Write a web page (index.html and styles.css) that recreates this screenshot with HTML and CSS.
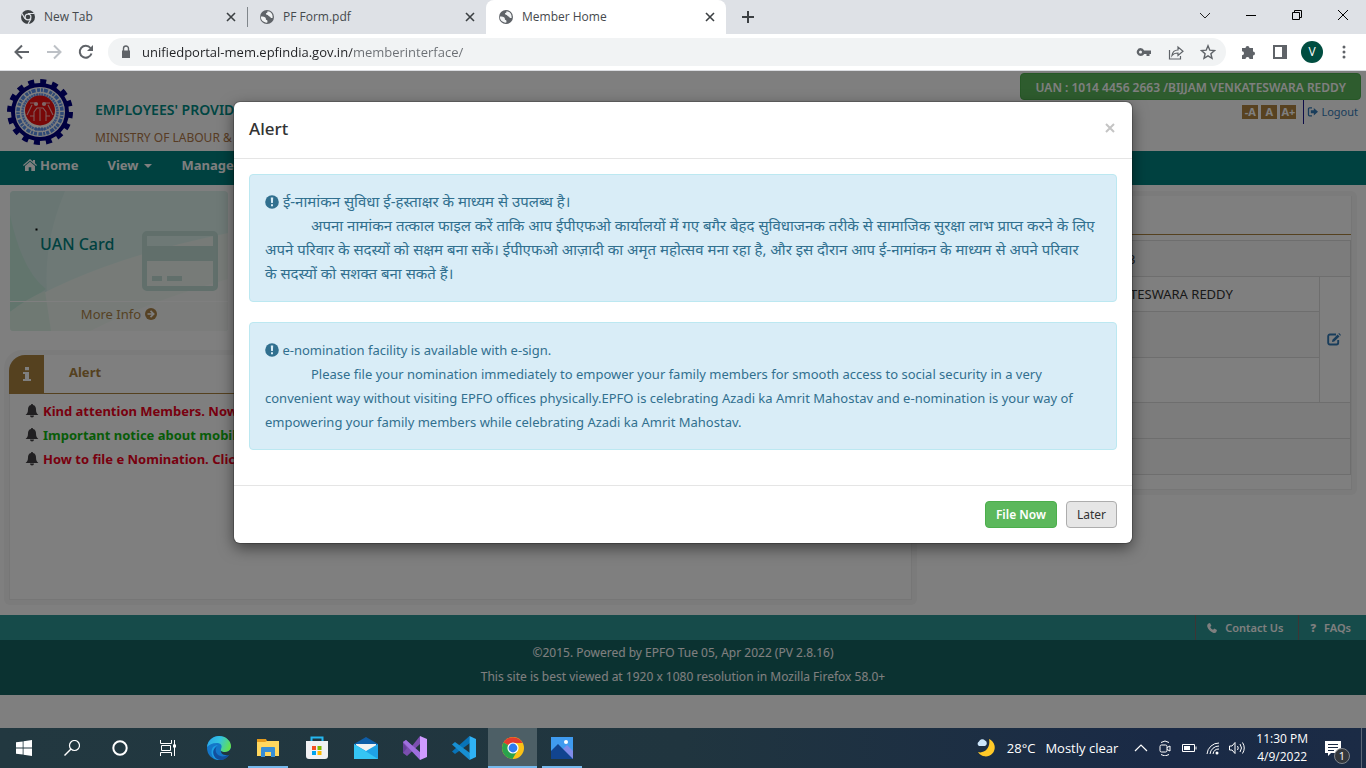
FILE: index.html
```html
<!DOCTYPE html>
<html lang="en">
<head>
<meta charset="utf-8">
<title>Member Home</title>
<link rel="stylesheet" href="styles.css">
</head>
<body>
<svg class="defs" aria-hidden="true">
  <symbol id="i-close" viewBox="0 0 16 16"><path d="M4 4l8 8M12 4l-8 8" stroke="currentColor" stroke-width="1.600" fill="none"/></symbol>
  <symbol id="i-globe" viewBox="0 0 16 16"><circle cx="8" cy="8" r="7" fill="#5f6368"/><path d="M1.8 7.6c2 .1 4.400 .2 4.900 1.300.4 1-.2 1.600 1 2 .9.300.8 1.400.7 2.700C5 14 1.800 11.500 1.800 7.600zM8.500 2.200c-.2 1.200.1 1.500-1 1.900-1 .4-.6 1.500.4 1.700 1.500.2 1.300 1.500 2.500 1.600 1.300.1 1 1.800 2.500 1.700l.7-.2C14 5 12 2.400 8.500 2.200z" fill="#f1f3f4"/></symbol>
  <symbol id="i-bell" viewBox="0 0 14 14"><path d="M7 0c.8 0 1 .5 1 1.100C10.300 1.600 11 3.500 11 5.500c0 3 1 4.400 2.400 5.500H.6C2 9.900 3 8.500 3 5.500c0-2 .7-3.900 3-4.400C6 .5 6.200 0 7 0zM5 11.500h4A2 2 0 0 1 5 11.500z" fill="#403f42"/></symbol>
  <symbol id="i-warn" viewBox="0 0 14 14"><circle cx="7" cy="7" r="6.800" fill="#31708f"/><path d="M5.800 2.500h2.400L7.900 8H6.100zM6 9.200h2v2H6z" fill="#d9edf7"/></symbol>
</svg>

<header class="tabstrip">
  <div class="tab">
    <svg class="i16" viewBox="0 0 16 16"><circle cx="8" cy="8" r="7" fill="#3c4043"/><path d="M8 4.500h6M5 9.800L2 4.500M11 9.800L8 15" stroke="#dee1e6" stroke-width="1.200"/><circle cx="8" cy="8" r="3.500" fill="#dee1e6"/><circle cx="8" cy="8" r="2.300" fill="#3c4043"/></svg>
    <span class="tab-name">New Tab</span>
    <button class="bare" aria-label="Close New Tab"><svg class="i16"><use href="#i-close"/></svg></button>
  </div>
  <div class="tab tab-divided">
    <svg class="i16"><use href="#i-globe"/></svg>
    <span class="tab-name">PF Form.pdf</span>
    <button class="bare" aria-label="Close PF Form.pdf"><svg class="i16"><use href="#i-close"/></svg></button>
  </div>
  <div class="tab tab-active">
    <svg class="i16"><use href="#i-globe"/></svg>
    <span class="tab-name">Member Home</span>
    <button class="bare" aria-label="Close Member Home"><svg class="i16"><use href="#i-close"/></svg></button>
  </div>
  <button class="bare new-tab" aria-label="New tab"><svg class="i16" viewBox="0 0 16 16"><path d="M8 2v12M2 8h12" stroke="#3c4043" stroke-width="2"/></svg></button>
  <div class="window-controls">
    <button class="bare" aria-label="Search tabs"><svg class="i16" viewBox="0 0 16 16"><path d="M3 6l5 5 5-5" fill="none" stroke="#222"/></svg></button>
    <button class="bare" aria-label="Minimize"><svg class="i16" viewBox="0 0 16 16"><path d="M3 8.500h10" stroke="#000"/></svg></button>
    <button class="bare" aria-label="Restore"><svg class="i16" viewBox="0 0 16 16"><path d="M3.500 5.500h7v7h-7zM5.500 5V3.500h7v7H11" fill="none" stroke="#000"/></svg></button>
    <button class="bare" aria-label="Close window"><svg class="i16" viewBox="0 0 16 16"><path d="M3 3l10 10M13 3L3 13" stroke="#000"/></svg></button>
  </div>
</header>

<div class="toolbar">
  <div class="nav-buttons">
    <button class="bare" aria-label="Back"><svg class="i16" viewBox="0 0 16 16"><path d="M15 8H2M8 1.500L1.500 8 8 14.500" fill="none" stroke="#5f6368" stroke-width="2"/></svg></button>
    <button class="bare" aria-label="Forward"><svg class="i16" viewBox="0 0 16 16"><path d="M1 8h13M8 1.500L14.500 8 8 14.500" fill="none" stroke="#bdc1c6" stroke-width="2"/></svg></button>
    <button class="bare" aria-label="Reload"><svg class="i16" viewBox="0 0 16 16"><path d="M13.500 9.500A6 6 0 1 1 12.500 4" fill="none" stroke="#5f6368" stroke-width="2"/><path d="M15 1v6H9z" fill="#5f6368"/></svg></button>
  </div>
  <div class="omnibox">
    <svg class="i16" viewBox="0 0 16 16"><path d="M4 6.500h8V14H4z" fill="#5f6368"/><path d="M5.500 7V4.500a2.500 2.500 0 0 1 5 0V7" fill="none" stroke="#5f6368" stroke-width="1.400"/></svg>
    <input class="url" type="text" aria-label="Address" value="unifiedportal-mem.epfindia.gov.in/memberinterface/">
    <button class="bare" aria-label="Passwords"><svg class="i16" viewBox="0 0 16 16"><path d="M4.500 4a4 4 0 0 1 3.700 2.500H15V10h-1.500v2h-3v-2H8.200A4 4 0 1 1 4.500 4zm0 2.500a1.500 1.500 0 1 0 0 3 1.500 1.500 0 0 0 0-3z" fill="#5f6368" fill-rule="evenodd"/></svg></button>
    <button class="bare" aria-label="Share"><svg class="i16" viewBox="0 0 16 16"><path d="M1.500 6v9h11v-3M4 11.500c.5-4 3-5.500 6-5.500V3l5 4.200-5 4.300V9c-2.500 0-4.500.5-6 2.500z" fill="none" stroke="#5f6368" stroke-width="1.200"/></svg></button>
    <button class="bare" aria-label="Bookmark"><svg class="i16" viewBox="0 0 16 16"><path d="M8 1.800l1.800 4.400 4.700.4-3.600 3.100 1.100 4.600L8 11.800l-4 2.500 1.100-4.600L1.500 6.600l4.700-.4z" fill="none" stroke="#5f6368" stroke-width="1.400"/></svg></button>
  </div>
  <div class="extensions">
    <button class="bare" aria-label="Extensions"><svg class="i16" viewBox="0 0 16 16"><path d="M2 4h3.500a2 2 0 1 1 4 0H13v3.500a2 2 0 1 1 0 4V15H9.500a2 2 0 1 0-4 0H2v-3.800a2 2 0 1 0 0-4z" fill="#5f6368"/></svg></button>
    <button class="bare" aria-label="Side panel"><svg class="i16" viewBox="0 0 16 16"><path d="M2 2h12v12H2z" fill="none" stroke="#5f6368" stroke-width="2"/><path d="M10 2h5v12h-5z" fill="#5f6368"/></svg></button>
    <button class="avatar">V</button>
    <button class="bare" aria-label="Menu"><svg class="i16" viewBox="0 0 16 16"><circle cx="8" cy="3" r="1.500"/><circle cx="8" cy="8" r="1.500"/><circle cx="8" cy="13" r="1.500"/></svg></button>
  </div>
</div>

<div class="page">
  <div class="masthead">
    <svg class="logo" viewBox="0 0 68 68">
      <circle cx="34" cy="34" r="30.500" fill="none" stroke="#000080" stroke-width="5" stroke-dasharray="5.980 5.995"/>
      <circle cx="34" cy="34" r="27" fill="#fff" stroke="#000080" stroke-width="4"/>
      <circle cx="34" cy="34" r="22" fill="none" stroke="#5a90ea" stroke-width="3.500" stroke-dasharray="3 1 2 1 4 1.500"/>
      <circle cx="34" cy="34" r="17.500" fill="none" stroke="#6c9cf0" stroke-width="2.500" stroke-dasharray="2 .6"/>
      <circle cx="34" cy="32.500" r="15" fill="#f01010"/>
      <path d="M21 37l5-10M47 37l-5-10M24 25h5M39 25h5M24 38h4M40 38h4M28 43v-9l3-4h6l3 4v9M34 31v12" stroke="#ffb8b8" stroke-width="1.100" fill="none"/>
      <circle cx="30" cy="26" r="2.100" fill="#ffd0d0"/><circle cx="38" cy="26" r="2.100" fill="#ffd0d0"/>
      <path d="M29 51h10" stroke="#5a90ea" stroke-width="3" stroke-dasharray="2 1"/>
    </svg>
    <div class="org">
      <div class="org-name">EMPLOYEES' PROVIDENT FUND</div>
      <div class="org-sub">MINISTRY OF LABOUR &amp; EMPLOYMENT</div>
    </div>
    <div class="account">
      <div class="uan">UAN : 1014 4456 2663 /BIJJAM VENKATESWARA REDDY</div>
      <div class="account-tools">
        <button class="size">-A</button><button class="size">A</button><button class="size">A+</button>
        <a class="logout" href="#"><svg viewBox="0 0 12 12"><path d="M5 1.800H2.500a1 1 0 0 0-1 1v6a1 1 0 0 0 1 1H5" fill="none" stroke="currentColor" stroke-width="1.300"/><path d="M3.800 4.300h3V2L11 5.800 6.800 9.600V7.300h-3z" fill="currentColor"/></svg>Logout</a>
      </div>
    </div>
  </div>

  <nav class="menu">
    <a href="#"><svg class="home" viewBox="0 0 14 12"><path d="M7 0l3 2.600V1h2v3.300L14 6l-.7.900L7 1.700.7 6.900 0 6zM7 2.800l5 4.200v5H8.300V8.300H5.700V12H2V7z" fill="currentColor"/></svg>Home</a>
    <a href="#">View <span class="caret"></span></a>
    <a href="#">Manage</a>
  </nav>

  <main class="content">
    <div class="left">
      <section class="card">
        <svg class="card-bg" viewBox="0 0 218 140" preserveAspectRatio="none">
          <path d="M0 0h218v140H0z" fill="#dcf3ed"/>
          <path d="M55 0C34 50 32 95 43 140H0V0z" fill="#d2ece7"/>
          <path d="M0 24Q12 80 36 98L0 122z" fill="#c4ebdb"/>
          <path d="M0 121Q80 70 218 42v98H0z" fill="#eef7f0"/>
          <path d="M0 121Q16 108 35 100l6 40H0z" fill="#def3e7"/>
          <path d="M80 140Q140 110 218 88v52z" fill="#f6f9f6"/>
          <path d="M25.500 37.500h2v2h-2z" fill="#000"/>
        </svg>
        <div class="card-main">
          <h2>UAN Card</h2>
          <svg class="credit" viewBox="0 0 76 60"><path d="M5 0h66a5 5 0 0 1 5 5v50a5 5 0 0 1-5 5H5a5 5 0 0 1-5-5V5a5 5 0 0 1 5-5zm0 5v10h66V5zm0 25v25h66V30zm5 15h10v5H10zm15 0h15v5H25z" fill="#c2dfd7" fill-rule="evenodd"/></svg>
        </div>
        <a class="card-more" href="#">More Info <svg viewBox="0 0 12 12"><circle cx="6" cy="6" r="6" fill="currentColor"/><path d="M2.500 6h6M5.500 2.800L8.700 6 5.500 9.200" fill="none" stroke="#fff" stroke-width="1.700"/></svg></a>
      </section>
      <section class="frame alerts">
        <div class="frame-in">
          <div class="alerts-head">
            <span class="info"><svg viewBox="0 0 8 16"><path d="M2 1h4v3.300H2zM0 6h6v7h2v2H0v-2h2V8H0z" fill="#fff"/></svg></span>
            <h2>Alert</h2>
          </div>
          <ul>
            <li class="red"><svg><use href="#i-bell"/></svg>Kind attention Members. Now</li>
            <li class="green"><svg><use href="#i-bell"/></svg>Important notice about mobile</li>
            <li class="red"><svg><use href="#i-bell"/></svg>How to file e Nomination. Click</li>
          </ul>
        </div>
      </section>
    </div>
    <section class="frame profile">
      <div class="frame-in">
        <div class="profile-head"></div>
        <table>
          <tr class="r36 odd"><td class="label"></td><td colspan="2">101444562663</td></tr>
          <tr class="r35"><td></td><td>BIJJAM VENKATESWARA REDDY</td><td class="edit" rowspan="3"><a href="#" aria-label="Edit"><svg viewBox="0 0 14 13"><path d="M9 1.500H3A1.700 1.700 0 0 0 1.200 3.200v6.600a1.700 1.700 0 0 0 1.700 1.700h6.600a1.700 1.700 0 0 0 1.700-1.700V7" fill="none" stroke="#337ab7" stroke-width="1.900"/><path d="M5 9l.4-2.300 5.200-5.200 1.900 1.900-5.200 5.200zM11.300.8l.8-.8L14 1.900l-.8.800z" fill="#337ab7"/></svg></a></td></tr>
          <tr class="r46 odd"><td></td><td></td></tr>
          <tr class="r45"><td></td><td></td></tr>
          <tr class="r36 odd"><td></td><td colspan="2"></td></tr>
          <tr class="r36 odd"><td></td><td colspan="2"></td></tr>
        </table>
      </div>
    </section>
  </main>

  <footer>
    <div class="foot-links">
      <a href="#"><svg viewBox="0 0 10 10"><path d="M1 .8L3 0l1.400 2.800-1.200 1.100c.5 1.200 1.600 2.300 2.900 2.900l1.100-1.200L10 7l-.8 2.200c-.6.800-2 .9-3.200.5C3 8.500 1.300 6.500.4 4.100 0 2.900.2 1.500 1 .8z" fill="currentColor"/></svg>Contact Us</a>
      <a href="#"><b class="q">?</b>FAQs</a>
    </div>
    <div class="foot-text">
      <p>©2015. Powered by EPFO Tue 05, Apr 2022 (PV 2.8.16)</p>
      <p>This site is best viewed at 1920 x 1080 resolution in Mozilla Firefox 58.0+</p>
    </div>
  </footer>

  <div class="backdrop">
    <div class="modal" role="dialog" aria-labelledby="modal-title">
      <div class="modal-head">
        <h1 id="modal-title">Alert</h1>
        <button class="bare modal-close" aria-label="Close"><svg viewBox="0 0 10 10"><path d="M1 1l8 8M9 1L1 9" stroke="#c4c4c4" stroke-width="2"/></svg></button>
      </div>
      <div class="modal-body">
        <div class="notice hindi" lang="hi">
          <p><svg><use href="#i-warn"/></svg> ई-नामांकन सुविधा ई-हस्ताक्षर के माध्यम से उपलब्ध है।</p>
          <p class="indent">अपना नामांकन तत्काल फाइल करें ताकि आप ईपीएफओ कार्यालयों में गए बगैर बेहद सुविधाजनक तरीके से सामाजिक सुरक्षा लाभ प्राप्त करने के लिए अपने परिवार के सदस्यों को सक्षम बना सकें। ईपीएफओ आज़ादी का अमृत महोत्सव मना रहा है, और इस दौरान आप ई-नामांकन के माध्यम से अपने परिवार के&nbsp;सदस्यों को सशक्त बना सकते हैं।</p>
        </div>
        <div class="notice">
          <p><svg><use href="#i-warn"/></svg> e-nomination facility is available with e-sign.</p>
          <p class="indent">Please file your nomination immediately to empower your family members for smooth access to social security in a very convenient way without visiting EPFO offices physically.EPFO is celebrating Azadi ka Amrit Mahostav and e-nomination is your way of empowering your family members while celebrating Azadi ka Amrit Mahostav.</p>
        </div>
      </div>
      <div class="modal-foot">
        <button class="btn btn-green">File Now</button>
        <button class="btn btn-grey">Later</button>
      </div>
    </div>
  </div>
</div>

<div class="taskbar">
  <div class="system-buttons">
    <button class="bare" aria-label="Start"><svg viewBox="0 0 16 16"><path d="M0 2.300L6.700 1.400v6.200H0zM7.500 1.200L16 0v7.600H7.500zM0 8.400h6.700v6.200L0 13.700zM7.500 8.400H16V16l-8.500-1.200z" fill="#fff"/></svg></button>
    <button class="bare" aria-label="Search"><svg viewBox="0 0 16 16"><circle cx="10.500" cy="5.500" r="5" fill="none" stroke="#fff" stroke-width="1.200"/><path d="M7 9l-6.500 6.500" stroke="#fff" stroke-width="1.400"/></svg></button>
    <button class="bare" aria-label="Cortana"><svg viewBox="0 0 16 16"><circle cx="8" cy="8" r="6.700" fill="none" stroke="#fff" stroke-width="2"/></svg></button>
    <button class="bare" aria-label="Task view"><svg viewBox="0 0 16 16"><path d="M.5 0v3.500h11V0M.5 16v-3.500h11V16M1.500 5.500h9v5h-9zM14.500 0v16" fill="none" stroke="#fff" stroke-width="1"/><path d="M13 4.500h3v3h-3z" fill="#fff"/></svg></button>
  </div>
  <div class="apps">
    <button class="bare" aria-label="Edge"><svg viewBox="0 0 24 24"><defs><linearGradient id="eg" x1="0" x2="1" y1="0.200" y2="0.500"><stop offset="0" stop-color="#2aa6e8"/><stop offset="0.500" stop-color="#33c3e0"/><stop offset="1" stop-color="#63e04f"/></linearGradient></defs><circle cx="12" cy="12" r="12" fill="#1476c8"/><path d="M0 11C1 4 6 0 12 0c7 0 12 5 12 10 0 4-3 6-6 6-4 0-5-1.500-4-3 2-4-1-6-4-6-5 0-8 2-10 4z" fill="url(#eg)"/><path d="M11 9c-5 2-6 10 0 13 2 1 3 2 3 2C7 25 3 19 5 13c1-3 4-4 6-4z" fill="#1b9de2"/><path d="M9.500 11c-3 5 2 11 9 9l4-1.500C19 24 13 25 10 23 5 20 5 13 9.500 11z" fill="#124f9d"/><path d="M14 13c-1 1.500 0 3 4 3 3 0 5-1.500 6-4v4c-1 2-2 3-2 3-6 1-9-2-8-6z" fill="#21363f"/></svg></button>
    <button class="bare running" aria-label="File Explorer"><svg viewBox="0 0 24 24"><path d="M1 3h9l1 2h12v15H1z" fill="#e39b1d"/><path d="M1 6h8l2-1h12v15H1z" fill="#ffd75e"/><path d="M5 21v-9a1 1 0 0 1 1-1h12a1 1 0 0 1 1 1v9h-4v-5H9v5z" fill="#368ed6"/></svg></button>
    <button class="bare" aria-label="Microsoft Store"><svg viewBox="0 0 24 24"><path d="M6.500 6V1.500h11V6" fill="none" stroke="#25b7ef" stroke-width="2"/><path d="M1 5h22v15a3 3 0 0 1-3 3H4a3 3 0 0 1-3-3z" fill="#f1f1f3"/><path d="M7 10h4v4H7z" fill="#f25022"/><path d="M12.500 10h4v4h-4z" fill="#7fba00"/><path d="M7 15h4v4H7z" fill="#00a4ef"/><path d="M12.500 15h4v4h-4z" fill="#ffb900"/></svg></button>
    <button class="bare" aria-label="Mail"><svg viewBox="0 0 24 24"><path d="M0 8l12-7 12 7v15H0z" fill="#0f5ea8"/><path d="M2 8h20v11H2z" fill="#f2f2f2"/><path d="M0 8l12 7 12-7v15H0z" fill="#1fa2e6"/><path d="M0 8l24 15H0z" fill="#35c5f4"/></svg></button>
    <button class="bare" aria-label="Visual Studio"><svg viewBox="0 0 24 24"><path d="M0 6l3-2 6 6 8-10v8L4 20l-4-3z" fill="#7b4fb0"/><path d="M3 4L0 6l17 18 1-7z" fill="#9f6fdf"/><path d="M17 0l7 3v18l-7 3z" fill="#cf9bff"/><path d="M0 7l4 5-4 5z" fill="#65409b"/></svg></button>
    <button class="bare" aria-label="Visual Studio Code"><svg viewBox="0 0 24 24"><path d="M0 15.500L17.500 0 18 7 3 18z" fill="#0873b8"/><path d="M0 8.500l3-2.500 15 11-.5 7z" fill="#178fd1"/><path d="M17.500 0L24 3v18l-6.500 3z" fill="#2fb2f5"/></svg></button>
    <button class="bare running current" aria-label="Chrome"><svg viewBox="0 0 24 24"><circle cx="12" cy="12" r="11" fill="#fbc116"/><path d="M12 12L2.500 6.500A11 11 0 0 1 21.600 7H12z" fill="#e33b2e"/><path d="M2.500 6.500A11 11 0 0 0 11.500 23l5-8.500L12 12z" fill="#2aa24c"/><circle cx="12" cy="12" r="5.600" fill="#fff"/><circle cx="12" cy="12" r="4.400" fill="#2f7cf0"/></svg></button>
    <button class="bare running" aria-label="Photos"><svg viewBox="0 0 24 24"><path d="M1 1h22v22H1z" fill="#3f9bf0"/><path d="M13 13l4-4 6 6v8H13z" fill="#7f8be8"/><path d="M1 15l7-7 15 15H1z" fill="#11448f"/><circle cx="16" cy="6" r="2" fill="#fff"/></svg></button>
  </div>
  <div class="tray">
    <svg class="moon" viewBox="0 0 20 20"><path d="M12 1a9 9 0 1 1-11 13c6 2 13-4 11-13z" fill="#ffc928"/><path d="M2 8a2.500 2.500 0 0 1 0-4.500 3.500 3.500 0 0 1 6-1A3 3 0 0 1 8 8z" fill="#cde6fa"/></svg>
    <span class="temp">28°C</span><span class="sky">Mostly clear</span>
    <svg class="t-ico" viewBox="0 0 16 16"><path d="M2 11l6-6 6 6" fill="none" stroke="#fff" stroke-width="1.200"/></svg>
    <svg class="t-ico" viewBox="0 0 16 16"><rect x="3" y="5" width="7" height="7" rx="1.500" fill="none" stroke="#fff"/><path d="M10 7.500l3-1.500v5l-3-1.500M4 2.500q4-3 8 0M4 14.500q4 3 8 0" fill="none" stroke="#fff"/></svg>
    <svg class="t-ico" viewBox="0 0 16 16"><path d="M1.500 4.500h12v7h-12zM15 6.500v3" fill="none" stroke="#fff"/><path d="M3 6h6v4H3z" fill="#fff"/></svg>
    <svg class="t-ico" viewBox="0 0 16 16"><path d="M2 14A12 12 0 0 1 14 3M5 14a9 9 0 0 1 9-8M8 14a6 6 0 0 1 6-5" fill="none" stroke="#fff"/><circle cx="12" cy="13" r="1.500" fill="#fff"/></svg>
    <svg class="t-ico" viewBox="0 0 16 16"><path d="M.5 6H3l3-3.500v11L3 10H.5z" fill="none" stroke="#fff"/><path d="M8.500 6q1.500 2 0 4M11 4q3 4 0 8M13.500 2.500q3.500 5.500 0 11" fill="none" stroke="#fff"/></svg>
    <div class="clock"><div>11:30 PM</div><div>4/9/2022</div></div>
    <button class="bare notes" aria-label="Notifications"><svg viewBox="0 0 16 16"><path d="M0 1h16v12H6l-3 3v-3H0z" fill="#fff"/><path d="M3 4.500h10M3 7.500h10M3 10.500h6" stroke="#1b2b45"/></svg><span class="count">1</span></button>
  </div>
</div>
</body>
</html>
```
FILE: styles.css
```css
* { box-sizing: border-box; }
body {
  margin: 0;
  min-height: 100vh;
  display: flex;
  flex-direction: column;
  font: 13px/24px "Noto Sans", "Open Sans", sans-serif;
  color: #333;
}
p, h1, h2, ul { margin: 0; padding: 0; }
a { color: inherit; text-decoration: none; }
svg { display: block; flex: none; }
.defs { position: absolute; width: 0; height: 0; }
.bare { border: 0; padding: 0; background: none; color: #3c4043; display: flex; align-items: center; justify-content: center; }
.i16 { width: 16px; height: 16px; }

/* browser window */
.tabstrip { display: flex; height: 34px; background: #dee1e6; font: 12px/34px "Open Sans", sans-serif; }
.tab { width: 239px; padding: 0 0 0 20px; display: flex; align-items: center; gap: 8px; color: #45494d; }
.tab-name { flex: 1; }
.tab-divided { background: linear-gradient(#80868b, #80868b) 8px center / 1px 20px no-repeat; }
.tab-active { background: #fff; border-radius: 8px 8px 0 0; width: 240px; margin-left: 8px; padding: 0 8px 0 12px; }
.new-tab { width: 44px; }
.window-controls { margin-left: auto; display: flex; padding-bottom: 4px; }
.window-controls .bare { width: 46px; }
.toolbar { display: flex; align-items: center; height: 37px; background: #fff; border-bottom: 1px solid #dadce0; padding-left: 14px; }
.nav-buttons { display: flex; gap: 16px; margin-right: 14px; }
.omnibox { flex: 1; display: flex; align-items: center; gap: 16px; height: 28px; border-radius: 14px; background: #f1f3f4; padding: 0 10px; }
.url {
  flex: 1;
  min-width: 0;
  margin-left: -8px;
  border: 0;
  padding: 0;
  font: 13px/20px "Open Sans", sans-serif;
  color: transparent;
  background: linear-gradient(90deg, #202124 210px, #6a6e73 210px);
  background-clip: text;
  -webkit-background-clip: text;
}
.extensions { display: flex; align-items: center; gap: 16px; padding: 0 14px; fill: #5f6368; }
.avatar { width: 22px; height: 22px; margin: 0 -3px; border: 0; border-radius: 50%; padding: 0; background: #004d40; color: #fff; font: 12px/22px "Open Sans", sans-serif; }

/* portal page */
.page { flex: 1; position: relative; background: #fff; }
.masthead { height: 80px; display: flex; padding: 2px 5px 0 6px; }
.logo { width: 68px; height: 68px; margin-top: 5px; }
.org { padding: 25px 0 0 21px; white-space: nowrap; }
.org-name { font-weight: 600; font-size: 14px; color: #008c86; }
.org-sub { font-size: 12px; color: #b07848; line-height: 32px; }
.account { margin-left: auto; }
.uan { background: #5cb85c; border: 1px solid #4cae4c; border-radius: 4px; color: #fff; height: 27px; line-height: 27px; padding: 0 14px; font-size: 12px; font-weight: 600; }
.account-tools { display: flex; justify-content: flex-end; align-items: center; gap: 3px; padding-right: 3px; }
.size { border: 0; padding: 0 1px; min-width: 16px; height: 14px; background: #b08440; color: #fff; font: 700 11px/14px "Noto Sans", sans-serif; }
.logout { display: flex; align-items: center; gap: 2px; margin-left: 4px; padding-left: 3px; border-left: 1px solid #1b1b90; color: #337ab7; font-size: 11px; }
.logout svg { width: 12px; height: 12px; }
.menu { height: 34px; background: #008280; display: flex; gap: 29px; padding: 2px 23px; color: #fff; font-weight: 700; font-size: 13px; }
.menu a { display: flex; align-items: center; height: 24px; gap: 3px; }
.home { width: 14px; height: 12px; }
.caret { border: 4px solid transparent; border-top-color: #fff; border-bottom: 0; margin-left: 3px; margin-top: 2px; }
.content { display: flex; align-items: flex-start; padding: 6px 9px 10px 4px; gap: 10px; }
.left { flex: 0 0 67.5%; display: flex; flex-direction: column; gap: 19px; min-width: 0; }
.card { position: relative; width: 218px; height: 140px; margin-left: 6px; border-radius: 4px; overflow: hidden; }
.card-bg { position: absolute; inset: 0; width: 100%; height: 100%; }
.card-main { position: relative; height: 111px; border-bottom: 1px solid #fff; display: flex; justify-content: space-between; padding: 40px 10px 0 30px; }
.card h2 { font-weight: 500; font-size: 16px; line-height: 26px; color: #008280; }
.credit { width: 76px; height: 60px; }
.card-more { position: relative; display: flex; justify-content: center; align-items: center; gap: 4px; color: #ad8448; }
.card-more svg { width: 12px; height: 12px; }
.frame { background: #f7f7f7; border-radius: 6px; padding: 5px; }
.frame-in { background: #fff; border: 1px solid #ececec; border-top: 0; }
.alerts { border-top-left-radius: 18px; }
.alerts .frame-in { height: 245px; border-top-left-radius: 16px; }
.alerts-head { display: flex; height: 39px; border-bottom: 1px solid #aa823f; margin-left: -1px; border-top-left-radius: 16px; overflow: hidden; }
.alerts-head h2 { font-size: 13px; font-weight: 700; line-height: 34px; color: #aa823f; padding-left: 25px; }
.info { width: 35px; background: #aa823f; display: flex; align-items: center; justify-content: center; }
.info svg { width: 8px; height: 16px; }
.alerts ul { list-style: none; padding: 5px 15px; font-weight: 700; white-space: nowrap; }
.alerts li { display: flex; align-items: center; gap: 4px; }
.alerts li svg { width: 14px; height: 14px; }
.red { color: #f00020; }
.green { color: #10b810; }
.profile { flex: 1; min-width: 0; }
.profile .frame-in { padding-bottom: 14px; }
.profile-head { height: 39px; border-bottom: 1px solid #aa823f; margin-bottom: 5px; }
.profile table { width: 100%; border-collapse: collapse; font-size: 13px; line-height: 20px; }
.profile td { border: 1px solid #dcdcdc; padding: 0 8px; }
.profile .label { width: 104px; }
.odd { background: #f9f9f9; }
.r35 { height: 35px; } .r36 { height: 36px; } .r45 { height: 45px; } .r46 { height: 46px; }
.profile .edit { width: 31px; background: #fff; padding: 0 7px; }
.edit svg { width: 14px; height: 13px; }
footer { color: #fff; }
.foot-links { display: flex; justify-content: flex-end; background: #2c9694; height: 25px; font-size: 11px; font-weight: 600; }
.foot-links a { display: flex; align-items: center; gap: 8px; padding: 0 15px 0 11px; border-left: 1px solid #7c6a6a; }
.foot-links svg { width: 10px; height: 10px; }
.foot-text { background: #166463; height: 55px; padding-top: 1px; text-align: center; font-size: 12px; }

/* dialog */
.backdrop { position: absolute; inset: 0; background: rgba(0, 0, 0, .5); padding: 31px 16px; }
.modal { max-width: 898px; margin: 0 auto; background: #fff; border-radius: 6px; box-shadow: 0 0 0 1px rgba(0, 0, 0, .2), 0 5px 15px rgba(0, 0, 0, .5); }
.modal-head { display: flex; align-items: center; justify-content: space-between; padding: 14px 17px 16px 15px; border-bottom: 1px solid #e5e5e5; height: 57px; }
.modal-head h1 { font-size: 17px; font-weight: 500; }
.modal-close { padding-bottom: 3px; }
.modal-close svg { width: 10px; height: 10px; }
.modal-body { padding: 15px 15px 35px; display: flex; flex-direction: column; gap: 20px; }
.notice { background: #d9edf7; border: 1px solid #bce8f1; border-radius: 4px; color: #31708f; padding: 15px; min-height: 128px; }
.notice svg { width: 14px; height: 14px; display: inline-block; vertical-align: -2px; }
.hindi { font-size: 15px; padding-top: 14px; }
.indent { text-indent: 46px; }
.modal-foot { border-top: 1px solid #e5e5e5; display: flex; justify-content: flex-end; gap: 9px; padding: 15px; }
.btn { border: 1px solid; border-radius: 4px; padding: 0 10px; height: 27px; font: 12px/26px "Noto Sans", sans-serif; }
.btn-green { background: #5cb85c; border-color: #4cae4c; color: #fff; font-weight: 600; }
.btn-grey { background: #e6e6e6; border-color: #adadad; color: #333; }

/* desktop taskbar */
.taskbar { display: flex; height: 40px; background: linear-gradient(90deg, #223840, #20353f 50%, #1a2a46 85%, #1b2b45); color: #fff; font: 13px/18px "Open Sans", sans-serif; }
.system-buttons, .apps { display: flex; }
.system-buttons .bare { width: 48px; }
.system-buttons svg { width: 16px; height: 16px; }
.apps { margin-left: 2px; }
.apps .bare { width: 49px; }
.apps svg { width: 24px; height: 24px; }
.running { background: linear-gradient(#76b9ed, #76b9ed) center bottom / 40px 2px no-repeat; }
.apps .current { background: linear-gradient(#76b9ed, #76b9ed) center bottom / 100% 2px no-repeat, #4d5f66; }
.tray { margin-left: auto; display: flex; align-items: center; gap: 8px; border-right: 1px solid #5b6676; margin-right: 4px; padding-right: 10px; }
.moon { width: 20px; height: 20px; margin-right: 2px; }
.sky { margin: 0 7px 0 2px; }
.t-ico { width: 16px; height: 16px; }
.clock { font-size: 12px; text-align: center; padding: 0 9px 0 3px; }
.notes { position: relative; width: 26px; height: 24px; justify-content: flex-start; align-items: flex-start; padding-top: 4px; }
.notes svg { width: 16px; height: 16px; }
.count { position: absolute; right: 1px; bottom: -4px; width: 16px; height: 16px; border-radius: 50%; border: 1px solid #81868c; background: #33373c; color: #fff; font: 11px/14px "Open Sans", sans-serif; text-align: center; }
```
